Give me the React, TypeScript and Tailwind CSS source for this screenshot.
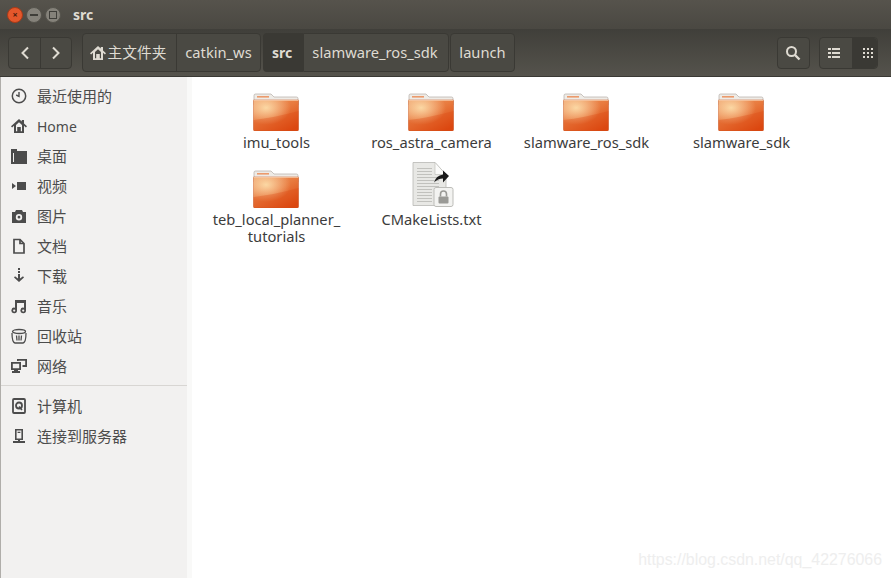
import React from "react";

const UI_FONT = "font-['Noto_Sans','Noto_Sans_CJK_SC',sans-serif]";

function HomeIcon({ className }: { className?: string }) {
  return (
    <svg viewBox="0 0 16 16" className={className} fill="currentColor">
      <path d="M8 1 0 8.200l1.100 1.200L3 7.800V15h10V7.800l1.900 1.600L16 8.200 13 5.500V2h-2.200v1.500L8 1Zm0 3.200 3 2.700v6.300H9.800V9H6.200v4.200H5V6.900l3-2.700Z" />
    </svg>
  );
}

function SidebarIcon({ name }: { name: string }) {
  const cls = "w-4 h-4 text-[#4c4c4c] shrink-0";
  if (name === "recent")
    return (
      <svg viewBox="0 0 16 16" className={cls} fill="none" stroke="currentColor">
        <circle cx="8" cy="8" r="6.700" strokeWidth="1.500" />
        <path d="M8 4v4.300L5.200 7" strokeWidth="1.400" />
      </svg>
    );
  if (name === "home") return <HomeIcon className={cls} />;
  if (name === "desktop")
    return (
      <svg viewBox="0 0 16 16" className={cls} fill="currentColor">
        <path d="M0 1h6v2h10v13H0V1Zm2 4v9h1V5H2Z" fillRule="evenodd" />
      </svg>
    );
  if (name === "video")
    return (
      <svg viewBox="0 0 16 16" className={cls} fill="currentColor">
        <path d="M6 4h9v8H6V4ZM1 5l4 3-4 3V5Z" />
      </svg>
    );
  if (name === "photo")
    return (
      <svg viewBox="0 0 16 16" className={cls} fill="currentColor">
        <path
          d="M5 2h6l1 2h3v11H1V4h3l1-2Zm3 4a3.200 3.200 0 1 0 0 6.400A3.200 3.200 0 0 0 8 6Zm0 1.800a1.400 1.400 0 1 1 0 2.800 1.400 1.400 0 0 1 0-2.800Z"
          fillRule="evenodd"
        />
      </svg>
    );
  if (name === "doc")
    return (
      <svg viewBox="0 0 16 16" className={cls} fill="none" stroke="currentColor" strokeWidth="1.700">
        <path d="M3 1.500h6l4 4v9.500H3V1.500Z" />
        <path d="M9 1.500v4h4" />
      </svg>
    );
  if (name === "download")
    return (
      <svg viewBox="0 0 16 16" className={cls} fill="currentColor">
        <path d="M7 0h2v2H7V0Zm0 3h2v2H7V3Zm0 3h2v4.500l3-2.200 1 1.300L8 14 3 9.600l1-1.300 3 2.200V6Z" />
      </svg>
    );
  if (name === "music")
    return (
      <svg viewBox="0 0 16 16" className={cls} fill="currentColor">
        <path
          d="M4 2h11v10.500a2.800 2.800 0 1 1-2-2.700V5H6v7.500a2.800 2.800 0 1 1-2-2.700V2ZM3.200 11.500a1.100 1.100 0 1 0 0 2.200 1.100 1.100 0 0 0 0-2.200Zm9 0a1.100 1.100 0 1 0 0 2.200 1.100 1.100 0 0 0 0-2.200Z"
          fillRule="evenodd"
        />
      </svg>
    );
  if (name === "trash")
    return (
      <svg viewBox="0 0 16 16" className={cls} fill="none" stroke="currentColor" strokeWidth="1.300">
        <ellipse cx="8" cy="3.500" rx="6.500" ry="2" />
        <path d="M1 5c0 6 .5 9.500 3 10h8c2.500-.5 3-4 3-10" />
        <path d="M5.500 7.500 6 12.500M8 7.500v5M10.500 7.500 10 12.500" />
      </svg>
    );
  if (name === "network")
    return (
      <svg viewBox="0 0 16 16" className={cls} fill="currentColor">
        <path
          d="M0 4h10v8H7v1h2v2H1v-2h2v-1H0V4Zm1.800 1.800v4.400h6.400V5.800H1.800ZM6 1h10v8h-4.500V7h2.700V2.800H7.500V3H6V1Z"
          fillRule="evenodd"
        />
      </svg>
    );
  if (name === "computer")
    return (
      <svg viewBox="0 0 16 16" className={cls} fill="none" stroke="currentColor">
        <rect x="2" y="1" width="12" height="14" rx="1" strokeWidth="1.800" />
        <circle cx="8" cy="7.500" r="3" strokeWidth="1.800" />
        <path d="M8 8.500 11 12" strokeWidth="1.500" />
      </svg>
    );
  return (
    <svg viewBox="0 0 16 16" className={cls} fill="currentColor">
      <path
        d="M4 1h8v11H9v1h5v2H2v-2h5v-1H4V1Zm1.600 1.600v7.800h4.800V2.600H5.600Zm1 1.200h2.800v1.200H6.600V3.800Z"
        fillRule="evenodd"
      />
    </svg>
  );
}

function FolderIcon() {
  return (
    <svg viewBox="0 0 46 38" className="w-[46px] h-[38px]">
      <defs>
        <linearGradient id="fbody" x1="0" y1="0" x2="0.800" y2="1">
          <stop offset="0" stopColor="#eea06a" />
          <stop offset="0.5" stopColor="#e87a3e" />
          <stop offset="1" stopColor="#dc4810" />
        </linearGradient>
        <radialGradient id="fglow" cx="0.28" cy="0.25" r="0.55">
          <stop offset="0" stopColor="#fcdca8" stopOpacity="0.95" />
          <stop offset="1" stopColor="#fbd3a8" stopOpacity="0" />
        </radialGradient>
      </defs>
      <path d="M1 2.500Q1 1 2.500 1H18l3 3h22.500Q45 4 45 5.500V12H1V2.500Z" fill="#eeebe6" stroke="#b4aea6" strokeWidth="0.700" />
      <rect x="4" y="3" width="12" height="1.600" fill="#ec9a6c" />
      <path d="M.5 7h45v29.500q0 1.500-1.500 1.500H2q-1.500 0-1.500-1.500V7Z" fill="url(#fbody)" stroke="#c4501f" strokeWidth="0.500" />
      <path d="M.5 7h45v29.500q0 1.500-1.500 1.500H2q-1.500 0-1.500-1.500V7Z" fill="url(#fglow)" />
      <path d="M.5 27Q20 25 45.500 18v18.500q0 1.500-1.500 1.500H2q-1.500 0-1.500-1.500V27Z" fill="#d9440f" fillOpacity="0.3" />
      <path d="M.5 7.500h45" stroke="#f7c9a4" strokeWidth="0.800" />
    </svg>
  );
}

function TextFileIcon() {
  return (
    <svg viewBox="0 0 46 48" className="w-[46px] h-[48px]">
      <g transform="translate(2 1.500)">
        <path d="M3 1h22l11 12v31H3V1Z" fill="#e8e8e5" stroke="#b8b8b4" strokeWidth="0.800" />
        <path d="M25 1v12h11L25 1Z" fill="#fbfbfa" stroke="#b8b8b4" strokeWidth="0.600" />
        <path
          d="M7 7h15M7 10h15M7 13h15M7 16h22M7 19h22M7 22h22M7 25h22M7 28h15M7 31h15M7 34h15M7 37h15M7 40h15"
          stroke="#bcbcb8"
          strokeWidth="0.900"
        />
        <path d="M24 21q2-7 9-8V9l6 5.500-6 6.500v-4q-5 0-9 4Z" fill="#1a1a1a" />
        <rect x="24" y="26" width="19" height="19" rx="2" fill="#f3f3f1" stroke="#bdbdb9" />
        <rect x="28.500" y="35" width="10" height="7" rx="1" fill="#9a9a96" />
        <path d="M30.500 35v-2.500a3 3 0 0 1 6 0V35" fill="none" stroke="#9a9a96" strokeWidth="1.600" />
      </g>
    </svg>
  );
}

const places = [
  { icon: "recent", label: "最近使用的" },
  { icon: "home", label: "Home" },
  { icon: "desktop", label: "桌面" },
  { icon: "video", label: "视频" },
  { icon: "photo", label: "图片" },
  { icon: "doc", label: "文档" },
  { icon: "download", label: "下载" },
  { icon: "music", label: "音乐" },
  { icon: "trash", label: "回收站" },
  { icon: "network", label: "网络" },
];

const devices = [
  { icon: "computer", label: "计算机" },
  { icon: "server", label: "连接到服务器" },
];

function SidebarRow({ icon, label }: { icon: string; label: string }) {
  return (
    <div className="h-[30px] flex items-center gap-[10px] pl-[10px] text-[15px] text-[#4c4c4c]">
      <SidebarIcon name={icon} />
      <span className={label === "Home" ? "text-[14px]" : ""}>{label}</span>
    </div>
  );
}

const files = [
  { name: "imu_tools", type: "folder" },
  { name: "ros_astra_camera", type: "folder" },
  { name: "slamware_ros_sdk", type: "folder" },
  { name: "slamware_sdk", type: "folder" },
  { name: "teb_local_planner_ tutorials", type: "folder" },
  { name: "CMakeLists.txt", type: "text" },
];

export default function App() {
  return (
    <div className={`w-[891px] h-[578px] overflow-hidden relative flex flex-col bg-white ${UI_FONT}`}>
      {/* title bar */}
      <div className="h-[29px] shrink-0 flex items-center bg-gradient-to-b from-[#56534c] to-[#4a4842] pl-[7px]">
        <div className="flex items-center gap-[3px]">
          <div className="w-4 h-4 rounded-full bg-[#e4572b] border border-[#a83a18] flex items-center justify-center text-[9px] leading-none text-[#4a1c0c] font-bold">
            ×
          </div>
          <div className="w-4 h-4 rounded-full bg-[#85827a] border border-[#55534c] flex items-center justify-center">
            <div className="w-2 h-[2px] bg-[#3f3e39]" />
          </div>
          <div className="w-4 h-4 rounded-full bg-[#85827a] border border-[#55534c] flex items-center justify-center">
            <div className="w-2 h-2 border border-[#3f3e39]" />
          </div>
        </div>
        <div className="ml-[12px] text-[14px] font-bold text-[#dfdbd2]">src</div>
      </div>

      {/* toolbar */}
      <div className="h-[48px] shrink-0 flex items-center pl-2 pr-[13px] bg-gradient-to-b from-[#403f3a] to-[#55534c] border-b border-[#3a3934]">
        <div className="w-[64px] h-[32px] flex rounded-[4px] border border-[#3a3934] bg-[#4a4943] text-[#dfdbd2]">
          <div className="w-[32px] flex items-center justify-center border-r border-[#3a3934]">
            <svg viewBox="0 0 12 14" className="w-3 h-[14px]" fill="none" stroke="currentColor" strokeWidth="2">
              <path d="M9 1.500 3.500 7 9 12.500" />
            </svg>
          </div>
          <div className="flex-1 flex items-center justify-center">
            <svg viewBox="0 0 12 14" className="w-3 h-[14px]" fill="none" stroke="currentColor" strokeWidth="2">
              <path d="M3 1.500 8.500 7 3 12.500" />
            </svg>
          </div>
        </div>

        <div className="ml-[10px] flex h-[39px] text-[14.700px] text-[#dfdbd2]">
          <div className="flex rounded-[4px] border border-[#3a3934] bg-[#4a4943]">
            <div className="w-[94px] pr-[3px] flex items-center justify-center gap-[2px] border-r border-[#3a3934]">
              <HomeIcon className="w-4 h-4" />
              <span>主文件夹</span>
            </div>
            <div className="w-[83px] flex items-center justify-center">catkin_ws</div>
          </div>
          <div className="ml-[2px] w-[40px] pr-[2px] flex items-center justify-center text-[14px] font-bold bg-[#3a3934] rounded-l-[4px]">src</div>
          <div className="w-[146px] pr-[2px] flex items-center justify-center border border-[#3a3934] bg-[#4a4943] rounded-r-[4px]">
            slamware_ros_sdk
          </div>
          <div className="ml-[1px] w-[65px] flex items-center justify-center border border-[#3a3934] bg-[#4a4943] rounded-[4px]">
            launch
          </div>
        </div>

        <div className="ml-auto w-[33px] h-[32px] pr-[1px] flex items-center justify-center rounded-[4px] border border-[#3a3934] bg-[#4a4943] text-[#dfdbd2]">
          <svg viewBox="0 0 16 16" className="w-4 h-4" fill="none" stroke="currentColor">
            <circle cx="6.500" cy="6.500" r="4.500" strokeWidth="2" />
            <path d="m10 10 4.500 4.500" strokeWidth="2.400" />
          </svg>
        </div>
        <div className="ml-[9px] w-[59px] h-[32px] flex rounded-[4px] border border-[#3a3934] bg-[#4a4943] text-[#dfdbd2]">
          <div className="w-[32px] pr-[4px] flex items-center justify-center">
            <svg viewBox="0 0 12 12" className="w-3 h-3" fill="currentColor">
              <path d="M0 1h3v2H0V1Zm4 0h8v2H4V1ZM0 5h3v2H0V5Zm4 0h8v2H4V5ZM0 9h3v2H0V9Zm4 0h8v2H4V9Z" />
            </svg>
          </div>
          <div className="flex-1 pl-[6px] flex items-center justify-center bg-[#3a3934] rounded-r-[4px]">
            <svg viewBox="0 0 12 12" className="w-3 h-3" fill="currentColor">
              <path d="M1 1h2v2H1V1Zm4 0h2v2H5V1Zm4 0h2v2H9V1ZM1 5h2v2H1V5Zm4 0h2v2H5V5Zm4 0h2v2H9V5ZM1 9h2v2H1V9Zm4 0h2v2H5V9Zm4 0h2v2H9V9Z" />
            </svg>
          </div>
        </div>
      </div>

      <div className="flex-1 flex min-h-0">
        {/* sidebar */}
        <div className="w-[188px] shrink-0 bg-[#f2f1f0] border-l border-[#b0aeaa] border-r pt-[4px]">
          {places.map((p) => (
            <SidebarRow key={p.label} icon={p.icon} label={p.label} />
          ))}
          <div className="h-px bg-[#d8d6d3] mt-[4px] mb-[5px]" />
          {devices.map((d) => (
            <SidebarRow key={d.label} icon={d.icon} label={d.label} />
          ))}
        </div>

        {/* file grid */}
        <div className="flex-1 bg-white pl-[6px] pt-[15px] border-l-[5px] border-[#f9f9f8] -ml-px">
          <div className="grid grid-cols-[repeat(4,155px)] auto-rows-[77px] text-[14.700px] leading-[17px] text-[#3c3c3c]">
            {files.map((f) => (
              <div key={f.name} className="flex flex-col items-center text-center">
                <div className="h-[39px] flex items-end justify-center">
                  {f.type === "folder" ? <FolderIcon /> : <TextFileIcon />}
                </div>
                <div className="mt-[3px] ml-[2px] w-[140px] break-words">{f.name}</div>
              </div>
            ))}
          </div>
        </div>
      </div>

      <div className="absolute right-[9px] bottom-[6px] text-[15.900px] text-[#eeeeee] font-['Liberation_Sans',sans-serif]">
        https://blog.csdn.net/qq_42276066
      </div>
    </div>
  );
}
